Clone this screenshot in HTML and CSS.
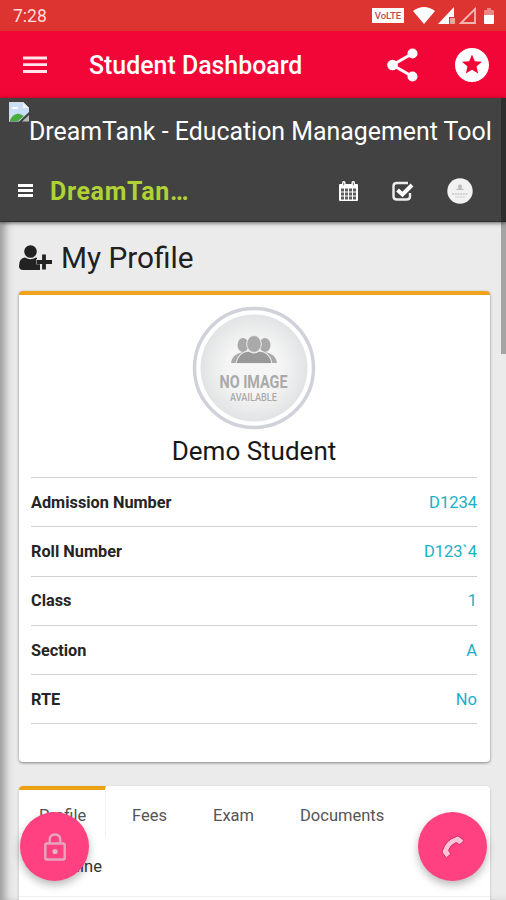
FILE: index.html
```html
<!DOCTYPE html>
<html lang="en">
<head>
<meta charset="utf-8">
<title>Student Dashboard</title>
<link rel="stylesheet" href="styles.css">
</head>
<body>
<div class="screen">
  <div class="status">
    <span class="clock">7:28</span>
    <span class="volte">VoLTE</span>
    <svg class="signals" width="86" height="18" viewBox="0 0 86 18">
      <path d="M1 4Q12-4 23 4L12 17Z" fill="#fff"/>
      <path d="M26 17L42 0V10H37V17Z" fill="#fff"/>
      <path d="M38 11h5v6h-5Z" fill="#f0a5a3"/>
      <path d="M49 16L63 2V16Z" fill="none" stroke="#f5b5b2" stroke-width="1.8"/>
      <path d="M72 4q0-1 1-1h2V1h4v2h2q1 0 1 1v5H72Z" fill="#ec8583"/>
      <path d="M72 8h10v8q0 1-1 1h-8q-1 0-1-1Z" fill="#fff"/>
    </svg>
  </div>
  <header class="appbar">
    <svg class="menu" width="24" height="18" viewBox="0 0 24 18"><path d="M0 2h24M0 8.700h24M0 15.500h24" stroke="#ffe6eb" stroke-width="2.800"/></svg>
    <h1 class="title">Student Dashboard</h1>
    <svg class="share" width="31" height="34" viewBox="0 0 31 34"><path d="M25.500 5.500L5.500 17L25.500 28.500" fill="none" stroke="#fff" stroke-width="3"/><circle cx="25.500" cy="5.500" r="5" fill="#fff"/><circle cx="5.500" cy="17" r="5.300" fill="#fff"/><circle cx="25.500" cy="28.500" r="5" fill="#fff"/></svg>
    <svg class="star" width="34" height="34" viewBox="2 2 20 20"><path fill="#fff" d="M11.990 2C6.470 2 2 6.480 2 12s4.470 10 9.990 10C17.520 22 22 17.520 22 12S17.520 2 11.990 2zm3.640 15L12 14.800 8.370 17l.96-4.130-3.200-2.770 4.220-.36L12 5.850l1.650 3.890 4.220.36-3.200 2.770L15.630 17z"/></svg>
  </header>
  <div class="site-head">
    <div class="brand-row">
      <svg class="broken" width="20" height="20" viewBox="0 0 20 20"><path d="M0 0H14L20 6V10L10 19.500H0Z" fill="#c9def7"/><path d="M14 0V6H20Z" fill="#f5f7f8"/><path d="M1 18Q6 9 13 13L15 14L9 19H1Z" fill="#48ad3c"/><path d="M3 7q0-3 3-2q3-1 3 2Z" fill="#fff"/><path d="M13 19.500L20 13V19.500Z" fill="#b8bcb9"/><path d="M.5 19.500V.5H14L19.500 6" fill="none" stroke="#d6d9dc"/></svg>
      <span class="brand-alt">DreamTank - Education Management Tool</span>
    </div>
    <nav class="nav">
      <svg class="nav-menu" width="15" height="13" viewBox="0 0 15 13"><path d="M0 1.500h15M0 6.500h15M0 11.500h15" stroke="#fff" stroke-width="2.800"/></svg>
      <span class="nav-brand">DreamTan…</span>
      <svg class="calendar" width="19" height="20" viewBox="0 0 19 20"><path fill="#fff" d="M0 4q0-1 1-1h17q1 0 1 1v15q0 1-1 1H1q-1 0-1-1Z"/><rect x="3" y="0" width="3.500" height="5" rx="1.500" fill="#fff"/><rect x="12.500" y="0" width="3.500" height="5" rx="1.500" fill="#fff"/><path d="M4.700 1.500v3M14.300 1.500v3" stroke="#777"/><path d="M2 7.500h3v3H2zm4 0h3v3H6zm4 0h3v3h-3zm4 0h3v3h-3zM2 11.500h3v3H2zm4 0h3v3H6zm4 0h3v3h-3zm4 0h3v3h-3zM2 15.500h3v3H2zm4 0h3v3H6zm4 0h3v3h-3zm4 0h3v3h-3z" fill="#5d5d5d"/></svg>
      <svg class="check" width="22" height="20" viewBox="0 0 22 20"><path d="M16 2H5Q1.500 2 1.500 5V15.500Q1.500 18.500 5 18.500H14.500Q18 18.500 18 15.500V12" fill="none" stroke="#eee" stroke-width="2.400"/><path d="M5.500 9L10.500 13.500L20 4" fill="none" stroke="#fff" stroke-width="4"/></svg>
      <svg class="mini" width="26" height="26" viewBox="0 0 26 26"><circle cx="13" cy="13" r="12.700" fill="#f2f2f2"/><circle cx="13" cy="8.500" r="2" fill="#bbb"/><path d="M8.500 12q4.500-4 9 0Z" fill="#bbb"/><path d="M5 16h16" stroke="#c6c6c6" stroke-width="1.500" stroke-dasharray="2 .7"/><path d="M8 19h10" stroke="#d4d4d4"/></svg>
    </nav>
  </div>
  <main class="content">
    <h2 class="heading">
      <svg width="33" height="26" viewBox="0 0 33 26"><circle cx="11.500" cy="6.500" r="6.300" fill="#222"/><path d="M0 21Q0 13 6 12.500Q11.500 16 17 12.500L18 13V18H21V25H4Q0 25 0 21Z" fill="#222"/><path d="M25 9.500V24M17 16.700H33" stroke="#ebebeb" stroke-width="5"/><path d="M25 9.500V24.500M17.500 17H33" stroke="#222" stroke-width="3.800"/></svg>
      <span>My Profile</span>
    </h2>
    <section class="card">
      <svg class="avatar" width="124" height="124" viewBox="0 0 124 124">
        <defs><radialGradient id="g"><stop offset=".5" stop-color="#f5f5f5"/><stop offset="1" stop-color="#e2e3e4"/></radialGradient></defs>
        <circle cx="62" cy="62" r="59.500" fill="#fff" stroke="#cfd2d9" stroke-width="3.500"/>
        <circle cx="62" cy="62" r="53.500" fill="url(#g)"/>
        <g transform="translate(0 3)">
          <g fill="#a9a9a9"><ellipse cx="51" cy="36" rx="5.500" ry="7"/><ellipse cx="73" cy="36" rx="5.500" ry="7"/><path d="M39 54Q40 45 51 43H73Q84 45 85 54Z"/></g>
          <path d="M44 54.500Q46 43 57 42Q62 46 67 42Q78 43 80 54.500Z" fill="#999" stroke="#eee" stroke-width="1.200"/>
          <ellipse cx="62" cy="35" rx="7.300" ry="8.500" fill="#aaa" stroke="#eee" stroke-width="1"/>
        </g>
        <text x="61.500" y="81.500" textLength="68" lengthAdjust="spacingAndGlyphs" class="no-image">NO IMAGE</text>
        <text x="61.500" y="94.500" textLength="47" lengthAdjust="spacingAndGlyphs" class="available">AVAILABLE</text>
      </svg>
      <h3 class="name">Demo Student</h3>
      <dl class="facts">
        <div class="fact"><dt>Admission Number</dt><dd>D1234</dd></div>
        <div class="fact"><dt>Roll Number</dt><dd>D123`4</dd></div>
        <div class="fact"><dt>Class</dt><dd>1</dd></div>
        <div class="fact"><dt>Section</dt><dd>A</dd></div>
        <div class="fact"><dt>RTE</dt><dd>No</dd></div>
      </dl>
    </section>
    <section class="tabs">
      <div class="tab active">Profile</div>
      <div class="tab">Fees</div>
      <div class="tab">Exam</div>
      <div class="tab">Documents</div>
      <div class="tab second">Timeline</div>
    </section>
  </main>
  <div class="scrollbar"></div>
  <div class="fab lock"><svg width="22" height="28" viewBox="0 0 22 28"><rect x="1.300" y="10.500" width="19.400" height="16" rx="1.500" fill="none" stroke="#e5a6bd" stroke-width="2.400"/><path d="M5.700 10V7Q5.700 1.500 11 1.500Q16.300 1.500 16.300 7V10" fill="none" stroke="#e5a6bd" stroke-width="2.400"/><circle cx="11" cy="18.500" r="2.600" fill="#e5b4c6"/></svg></div>
  <div class="fab call"><svg width="24" height="24" viewBox="0 0 24 24"><path d="M15.500 1.500Q17 .5 18 1.500L22 4.500Q23 5.500 22 6.500L19.500 9Q18.500 9.700 17.500 9L15.500 7.500Q9.500 9.500 7.500 15.500L9 17.500Q9.700 18.500 9 19.500L6.500 22Q5.500 23 4.500 22L1.500 18Q.8 17 1.500 15.500Q4.500 5 15.500 1.500Z" fill="#ffc2d6" stroke="#c32a62" stroke-width="1"/></svg></div>
</div>
</body>
</html>
```
FILE: styles.css
```css
* { box-sizing: border-box; }
body { margin: 0; font-family: Roboto, "Liberation Sans", sans-serif; }
h1, h2, h3, dl, dd { margin: 0; font-weight: 400; }
svg { display: block; flex: none; }
.screen { position: relative; width: 506px; height: 900px; overflow: hidden; background: #ebebeb; }
.status { height: 31px; background: #dd3331; display: flex; align-items: center; padding: 0 10px 0 13px; }
.clock { color: #ffdedc; font-size: 17.5px; flex: 1; padding-top: 1px; }
.volte { width: 32px; height: 15px; background: #fff; color: #b94a50; font-size: 9.5px; font-weight: 500; line-height: 15px; text-align: center; margin-right: 8px; }
.signals { width: 86px; margin-right: -2px; }
.appbar { height: 67px; background: #f20637; display: flex; align-items: center; padding: 0 17px 0 23px; }
.title { flex: 1; margin-left: 42px; color: #fff; font-size: 24.9px; font-weight: 500; white-space: nowrap; padding-top: 2px; }
.share { margin-right: 37px; }
.site-head { height: 124px; background: #424242; border-bottom: 1px solid #303030; position: relative; box-shadow: 0 1px 4px rgba(0,0,0,.55); }
.brand-row { display: flex; height: 62px; padding: 4px 0 0 9px; }
.brand-alt { color: #fff; font-size: 24.9px; line-height: 30px; padding-top: 15px; white-space: nowrap; }
.nav { display: flex; height: 61px; align-items: center; padding: 0 33px 0 18px; }
.nav-brand { flex: 1; margin-left: 17px; color: #b1d235; font-size: 25px; font-weight: 700; letter-spacing: .65px; padding-top: 2px; }
.calendar { margin-right: 34px; }
.check { margin-right: 33px; }
.content { padding: 0 16px 0 19px; height: 678px; box-shadow: inset 9px 0 8px -4px #999; }
.heading { height: 69px; padding: 2px 0 0; display: flex; align-items: center; gap: 9px; color: #202020; font-size: 29.8px; }
.card { height: 471px; background: #fff; border-top: 4px solid #f0a21f; border-radius: 4px; padding: 11px 13px 11px 12px; box-shadow: 0 1px 3px rgba(0,0,0,.45); }
.avatar { margin: 0 auto; }
.no-image, .available { fill: #aaa; font-weight: 700; text-anchor: middle; font-size: 18px; }
.available { font-size: 11px; font-weight: 500; }
.name { height: 47px; line-height: 42px; text-align: center; font-size: 26px; color: #171717; }
.facts { border-top: 1px solid #d0d0d0; }
.fact { display: flex; justify-content: space-between; align-items: center; height: 49.3px; border-bottom: 1px solid #d0d0d0; font-size: 16.5px; }
.fact dt { font-weight: 700; font-size: 16.3px; color: #252525; }
.fact dd { color: #19b0c7; }
.tabs { margin-top: 24px; height: 130px; background: #fff; border-radius: 4px; display: flex; flex-wrap: wrap; align-content: flex-start; box-shadow: 0 1px 3px rgba(0,0,0,.2); color: #555; font-size: 16.5px; }
.tab { height: 51px; line-height: 51px; padding: 4px 0 0 26px; width: 80px; }
.tab.active { width: 87px; border-top: 4px solid #eba116; border-right: 1px solid #f3f3f3; padding: 0 0 0 20px; border-radius: 4px 0 0; }
.tab:nth-child(3) { padding-left: 27px; }
.tab:nth-child(4) { width: 160px; padding-left: 34px; }
.tab.second { width: 100%; padding: 4px 0 0 20px; height: 60px; border-bottom: 1px solid #f0f0f0; color: #333; }
.scrollbar { position: absolute; left: 501px; top: 98px; width: 5px; height: 256px; background: rgba(0,0,0,.3); }
.fab { position: absolute; width: 69px; height: 69px; top: 812px; border-radius: 50%; background: #ff4081; display: grid; place-items: center; box-shadow: 0 4px 8px rgba(0,0,0,.28); }
.lock { left: 20px; }
.call { left: 418px; }
```
